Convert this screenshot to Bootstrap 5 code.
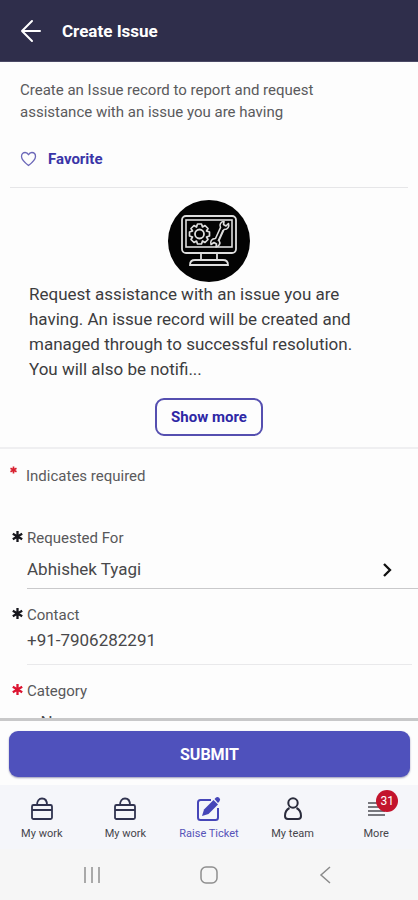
<!DOCTYPE html>
<html lang="en">
<head>
<meta charset="utf-8">
<meta name="viewport" content="width=device-width, initial-scale=1">
<title>Create Issue</title>
<link href="https://cdn.jsdelivr.net/npm/bootstrap@5.3.0/dist/css/bootstrap.min.css" rel="stylesheet">
<style>
  body { font-family: Roboto, "Liberation Sans", sans-serif; color: #3c3c3e; background: #fdfdfd; }
  svg { display: block; flex: none; }
  .app-header { background: #2f2e4b; padding: 19px 20px 18px; border-bottom: 1px solid #4b4a66; gap: 18px; }
  .app-header h1 { font-size: 17px; line-height: 24px; }
  .scroll-area { min-height: 0; overflow-y: auto; scrollbar-width: none; }
  .scroll-area::-webkit-scrollbar { display: none; }
  .summary { padding: 17px 10px 0; }
  .summary-text { font-size: 15px; line-height: 22px; color: #5a5a5c; padding: 0 60px 0 10px; }
  .favorite { font-size: 15px; line-height: 20px; color: #3a35a8; padding: 0 10px; margin: 26px 0 18px; }
  .rule { border-top: 1px solid #e6e6e8; }
  .details { padding: 12px 29px 11px; border-bottom: 2px solid #efeff1; }
  .details p { font-size: 17px; line-height: 25px; padding-right: 20px; }
  .show-more { font-size: 15px; line-height: 22px; color: #2e27a5; border: 2px solid #554fb0; border-radius: 9px; padding: 6px 14px; }
  .legend-row { font-size: 15px; line-height: 20px; color: #5a5a5c; padding: 17px 10px 0; margin-bottom: 42px; gap: 9px; }
  .field { padding-left: 12px; }
  .field-label { font-size: 15px; line-height: 20px; color: #58585a; gap: 4px; }
  .field-body { margin-left: 15px; font-size: 17px; line-height: 24px; }
  .field-body input, .field-body select { color: #48484a; background: transparent; min-width: 0; appearance: none; outline-offset: -2px; }
  .lookup { padding: 9px 24px 7px 0; border-bottom: 1px solid #c9c9cb; }
  .contact-line { padding: 3px 0 12px; margin-right: 6px; border-bottom: 1px solid #e9e9eb; }
  .category-line { padding: 9px 0; margin-right: 6px; }
  .actions { border-top: 3px solid #c8c8c9; padding: 10px 8px 8px 9px; }
  .submit { font-size: 16px; line-height: 22px; color: #fff; background: #4f51bc; border: 0; border-radius: 9px; padding: 13px 12px 11px; box-shadow: 0 1px 2px #9a9ab8; }
  .submit:hover { color: #fff; background: #4547ae; }
  .tabs { background: #f5f6fa; padding: 11px 0 8px; }
  .tabs a { font-size: 11px; line-height: 14px; color: #45454a; gap: 5px; }
  .tabs a.current { color: #5653b8; }
  .count { width: 22px; height: 22px; left: 13px; top: -6px; font-size: 12px; line-height: 22px; background: #c3142d; }
  .system-nav { background: #f6f6f6; padding: 12px 33px 11px; }
</style>
</head>
<body class="vh-100 d-flex flex-column overflow-hidden">
<header class="app-header d-flex align-items-center">
  <button class="btn p-0 border-0" type="button" aria-label="Back">
    <svg width="24" height="24" viewBox="0 0 24 24" fill="none" stroke="#fff" stroke-width="2" stroke-linecap="round" stroke-linejoin="round"><path d="M12 2 2 12l10 10M2 12h18"/></svg>
  </button>
  <h1 class="fw-bold text-white mb-0">Create Issue</h1>
</header>

<main class="scroll-area flex-grow-1">
  <section class="summary">
    <p class="summary-text mb-0">Create an Issue record to report and request assistance with an issue you are having</p>
    <button class="favorite btn border-0 fw-bold d-flex align-items-center gap-2" type="button">
      <svg width="20" height="16" viewBox="0 0 20 16" fill="none" stroke="#6b67b8" stroke-width="1.3" stroke-linejoin="round"><path d="M8.500 14.500C5 11.800 1.500 9 1.500 5.500 1.500 3 3.200 1.500 5.200 1.500c1.400 0 2.600.8 3.300 2.200.7-1.400 1.900-2.200 3.300-2.200 2 0 3.700 1.500 3.700 4 0 3.500-3.500 6.300-7 9z"/></svg>
      Favorite
    </button>
    <div class="rule"></div>
  </section>

  <section class="details">
    <svg class="mx-auto" width="82" height="82" viewBox="0 0 82 82" fill="none" stroke="#dedede" role="img" aria-label="Monitor with gear and wrench">
      <circle cx="41" cy="41" r="41" fill="#030303" stroke="none"/>
      <rect x="14" y="16" width="54" height="37" rx="4" stroke-width="1.800"/>
      <rect x="18" y="20" width="46" height="27" stroke-width="1.600"/>
      <path d="M33 54v6h-6q-5 0-5 5h38q0-5-5-5h-6v-6M33 60h16" stroke-width="1.800"/>
      <circle cx="31.500" cy="34" r="4.500" stroke-width="1.800"/>
      <path d="M29.500 24h4l1 3 2.500-1.500 3 3-1.500 2.500 3 1v4l-3 1 1.500 2.500-3 3-2.500-1.500-1 3h-4l-1-3-2.500 1.500-3-3 1.500-2.500-3-1v-4l3-1-1.500-2.500 3-3 2.500 1.500z" stroke-width="1.700" stroke-linejoin="round"/>
      <path d="M56 21.500c-3 0-5 3-3.500 6l-5 11c-4 0-5.500 3-4.500 6l3-2 2.500 1.500-.5 3c3-.5 5-3.500 3-6.500l5-11c4 0 5.500-3 4.500-6l-2.500 2.500-2.500-1.500z" stroke-width="1.600" stroke-linejoin="round"/>
      <path d="m55 30-5 11" stroke-width="1.200"/>
    </svg>
    <p class="mb-0">Request assistance with an issue you are having. An issue record will be created and managed through to successful resolution. You will also be notifi...</p>
    <div class="text-center pt-3">
      <button class="show-more btn fw-bold" type="button">Show more</button>
    </div>
  </section>

  <form id="issue-form">
    <div class="legend-row d-flex">
      <svg width="7" height="8" viewBox="0 0 10 10" stroke="#d8202f" stroke-width="2.400"><path d="M5 0v10M.7 2.500l8.600 5M9.300 2.500l-8.600 5"/></svg>
      <span>Indicates required</span>
    </div>

    <div class="field mb-3">
      <label class="field-label d-flex" for="requested-for">
        <svg width="11" height="17" viewBox="0 0 11 17" stroke="#16161c" stroke-width="2.300"><path d="M5.500 3v11M.8 5.800l9.400 5.400M10.200 5.800.8 11.200"/></svg>
        Requested For
      </label>
      <div class="field-body lookup d-flex align-items-center">
        <input class="border-0 p-0 flex-grow-1" id="requested-for" type="text" value="Abhishek Tyagi" readonly>
        <svg width="14" height="16" viewBox="0 0 14 16" fill="none" stroke="#111" stroke-width="2.300"><path d="m4 3 6 6-6 6"/></svg>
      </div>
    </div>

    <div class="field mb-3">
      <label class="field-label d-flex" for="contact">
        <svg width="11" height="17" viewBox="0 0 11 17" stroke="#16161c" stroke-width="2.300"><path d="M5.500 3v11M.8 5.800l9.400 5.400M10.200 5.800.8 11.200"/></svg>
        Contact
      </label>
      <div class="field-body contact-line d-flex">
        <input class="border-0 p-0 flex-grow-1" id="contact" type="tel" value="+91-7906282291">
      </div>
    </div>

    <div class="field">
      <label class="field-label d-flex" for="category">
        <svg width="11" height="17" viewBox="0 0 11 17" stroke="#dc1431" stroke-width="2.300"><path d="M5.500 3v11M.8 5.800l9.400 5.400M10.200 5.800.8 11.200"/></svg>
        Category
      </label>
      <div class="field-body category-line d-flex">
        <select class="border-0 p-0 flex-grow-1" id="category"><option>-- None --</option></select>
      </div>
    </div>
  </form>
</main>

<div class="actions">
  <button class="submit btn w-100 fw-bold" type="submit" form="issue-form">SUBMIT</button>
</div>

<nav class="tabs row row-cols-5 g-0" aria-label="Main">
  <a class="col d-flex flex-column align-items-center text-decoration-none" href="#work">
    <svg width="26" height="26" viewBox="0 0 26 26" fill="none" stroke="#30334f" stroke-width="1.800"><rect x="3" y="9" width="20" height="14" rx="1.500"/><path d="M3 14h20M8 9c0-4 2-6.500 5-6.500s5 2.500 5 6.500"/></svg>
    My work
  </a>
  <a class="col d-flex flex-column align-items-center text-decoration-none" href="#tasks">
    <svg width="26" height="26" viewBox="0 0 26 26" fill="none" stroke="#30334f" stroke-width="1.800"><rect x="3" y="9" width="20" height="14" rx="1.500"/><path d="M3 14h20M8 9c0-4 2-6.500 5-6.500s5 2.500 5 6.500"/></svg>
    My work
  </a>
  <a class="current col d-flex flex-column align-items-center text-decoration-none" href="#ticket" aria-current="page">
    <svg width="26" height="26" viewBox="0 0 26 26"><path d="M15 4H4.500Q2 4 2 6.500v15Q2 24 4.500 24h15q2.500 0 2.500-2.500V12" fill="none" stroke="#4646b8" stroke-width="2"/><path d="m6 20 2-6.500L17.500 4l4.500 4.500-9.500 9.500z" fill="#4646b8"/><path d="m18.500 3 1.500-1.500q1.500-1.200 3.200.3 1.800 1.700.3 3.400L22 7z" fill="#4646b8"/></svg>
    Raise Ticket
  </a>
  <a class="col d-flex flex-column align-items-center text-decoration-none" href="#team">
    <svg width="26" height="26" viewBox="0 0 26 26" fill="none" stroke="#2a2c3c" stroke-width="2"><circle cx="13" cy="7" r="4.700"/><path d="M9.500 12C6.500 13.500 5 16.500 5 20q0 3 3 3h10q3 0 3-3c0-3.500-1.500-6.500-4.500-8"/></svg>
    My team
  </a>
  <a class="col d-flex flex-column align-items-center text-decoration-none" href="#more">
    <span class="position-relative">
      <svg width="26" height="26" viewBox="0 0 26 26" stroke="#77777d" stroke-width="2"><path d="M5 7h17M5 11h17M5 15h17M5 19h17"/></svg>
      <span class="count position-absolute rounded-circle text-white text-center">31</span>
    </span>
    More
  </a>
</nav>

<div class="system-nav d-flex justify-content-around">
  <button class="btn p-0 border-0" type="button" aria-label="Recent apps"><svg width="28" height="28" viewBox="0 0 28 28" stroke="#a9a9a9" stroke-width="2"><path d="M7 6v16M14 6v16M21 6v16"/></svg></button>
  <button class="btn p-0 border-0" type="button" aria-label="Home"><svg width="28" height="28" viewBox="0 0 28 28" fill="none" stroke="#8e8e8e" stroke-width="1.500"><rect x="6" y="6" width="16" height="16" rx="5"/></svg></button>
  <button class="btn p-0 border-0" type="button" aria-label="System back"><svg width="28" height="28" viewBox="0 0 28 28" fill="none" stroke="#8a8a8a" stroke-width="1.500"><path d="m18 6-9 8 9 8"/></svg></button>
</div>
<script src="https://cdn.jsdelivr.net/npm/bootstrap@5.3.0/dist/js/bootstrap.bundle.min.js"></script>
</body>
</html>
